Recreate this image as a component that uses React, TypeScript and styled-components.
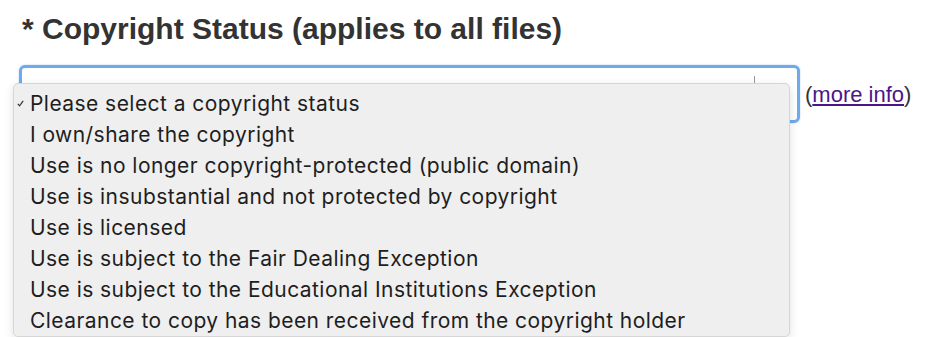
import React from 'react'
import styled, { createGlobalStyle } from 'styled-components'

const GlobalStyle = createGlobalStyle`
  body {
    margin: 0;
    background: #ffffff;
    font-family: 'Liberation Sans', Arial, sans-serif;
  }
`

const Page = styled.div`
  box-sizing: border-box;
  height: 337px;
  padding: 9px 0 0 19px;
`

const Title = styled.h2`
  margin: 0 0 16px 3px;
  font-size: 30px;
  line-height: 40px;
  font-weight: bold;
  color: #333333;
`

const FieldRow = styled.div`
  display: flex;
  align-items: center;
  gap: 5px;
`

const SelectWrap = styled.div`
  position: relative;
  width: 781px;
  height: 58px;
`

const SelectBox = styled.div`
  box-sizing: border-box;
  height: 100%;
  border: 3px solid #72a9ea;
  border-radius: 6px;
  background: #ffffff;
  box-shadow: 0 0 2px #a9cdf5;
  display: flex;
  justify-content: flex-end;
  padding: 8px 42px 0 0;
`

const Divider = styled.span`
  width: 1px;
  height: 10px;
  background: #9a9a9a;
`

const Menu = styled.ul`
  position: absolute;
  left: -6px;
  top: 18px;
  width: 777px;
  box-sizing: border-box;
  margin: 0;
  padding: 4px 0 0;
  list-style: none;
  background: #efefef;
  border: 1px solid #d6d6d6;
  border-radius: 5px;
  box-shadow: 0 3px 10px rgba(0, 0, 0, 0.12);
  z-index: 2;
`

const Option = styled.li`
  position: relative;
  height: 31px;
  padding-left: 16px;
  font-family: Inter, 'Liberation Sans', sans-serif;
  font-size: 21px;
  letter-spacing: 0.45px;
  line-height: 31px;
  color: #1e1e1e;
  white-space: nowrap;
`

const Check = styled.svg`
  position: absolute;
  left: 3px;
  top: 12px;
`

const MoreInfo = styled.span`
  font-size: 22px;
  color: #333333;
  margin-top: 2px;

  a {
    color: #4b1688;
    text-decoration: underline;
  }
`

const options = [
  'Please select a copyright status',
  'I own/share the copyright',
  'Use is no longer copyright-protected (public domain)',
  'Use is insubstantial and not protected by copyright',
  'Use is licensed',
  'Use is subject to the Fair Dealing Exception',
  'Use is subject to the Educational Institutions Exception',
  'Clearance to copy has been received from the copyright holder',
]

const App = () => {
  return (
    <Page>
      <GlobalStyle />
      <Title>* Copyright Status (applies to all files)</Title>
      <FieldRow>
        <SelectWrap>
          <SelectBox>
            <Divider />
          </SelectBox>
          <Menu>
            {options.map((opt, i) => (
              <Option key={opt}>
                {i === 0 && (
                  <Check width="7" height="7" viewBox="0 0 7 7">
                    <path d="M0.8 3.8 L2.6 5.8 L6.2 0.8" fill="none" stroke="#333" strokeWidth="1.2" />
                  </Check>
                )}
                {opt}
              </Option>
            ))}
          </Menu>
        </SelectWrap>
        <MoreInfo>
          (<a href="#">more info</a>)
        </MoreInfo>
      </FieldRow>
    </Page>
  )
}

export default App
